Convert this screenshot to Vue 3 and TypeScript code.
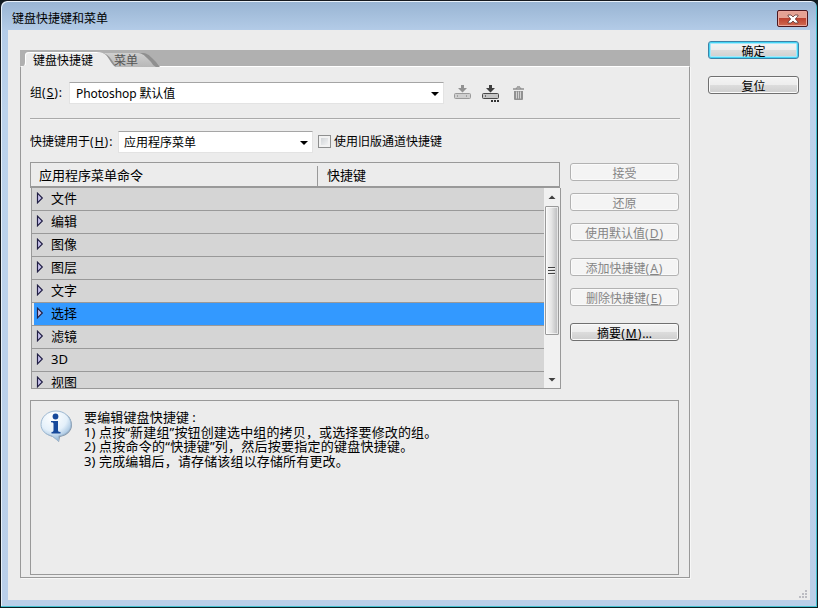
<script setup lang="ts">
import { ref } from 'vue'

interface Action {
  label: string
  key?: string
  tail?: string
  enabled?: boolean
  spaced?: boolean
}

const menus: string[] = ['文件', '编辑', '图像', '图层', '文字', '选择', '滤镜', '3D', '视图']
const selected = ref('选择')
const legacy = ref(false)
const actions: Action[] = [
  { label: '接受' },
  { label: '还原' },
  { label: '使用默认值', key: 'D' },
  { label: '添加快捷键', key: 'A', spaced: true },
  { label: '删除快捷键', key: 'E' },
  { label: '摘要', key: 'M', tail: '...', enabled: true, spaced: true },
]
</script>

<template>
  <div class="window">
    <header class="titlebar">
      <span class="title">键盘快捷键和菜单</span>
      <button class="close" aria-label="关闭">
        <svg width="12" height="10" viewBox="0 0 12 10">
          <path d="M1 1h3l2 2 2-2h3v1L8.3 5 11 8v1H8L6 7 4 9H1V8l2.7-3L1 2z" fill="#fff" stroke="#5b3434" stroke-width=".8" />
        </svg>
      </button>
    </header>
    <main class="client">
      <section class="panel">
        <nav class="tabs">
          <svg class="tab-shapes" width="160" height="17" viewBox="0 0 160 17">
            <defs>
              <linearGradient id="idleTab" x2="0" y2="1">
                <stop stop-color="#cfcfcf" /><stop offset="1" stop-color="#b7b7b7" />
              </linearGradient>
            </defs>
            <path d="M84 3h37c6 0 8 2 11 5l4 4q2 3 4 5H90z" fill="#8f8f8f" />
            <path d="M84 3h34c6 0 8 2 11 5l4 4q2 4 5 5H90z" fill="url(#idleTab)" transform="translate(-2 0)" />
            <path d="M82 3c6 1 9 5 14 14H83z" fill="#929292" />
            <path d="M0 17q5 0 5-5V5q0-3 4-3h68c6 0 9 2 12 7q4 7 7 8z" fill="#ececec" />
            <path d="M5.5 15V5q0-2.500 4-2.500h68" fill="none" stroke="#fff" />
          </svg>
          <span class="tab current">键盘快捷键</span>
          <span class="tab idle">菜单</span>
        </nav>
        <div class="panel-body">
          <div class="set-row">
            <label>组<span class="mnemonic">(<u>S</u>):</span></label>
            <div class="combo set-combo"><span class="set-name">Photoshop 默认值</span><i class="arrow" /></div>
            <svg class="tool" width="18" height="16" viewBox="0 0 18 16">
              <rect x=".5" y="8.500" width="16" height="5" rx="1" fill="#cfcfcf" stroke="#999" />
              <path d="M7 0h3v3h3L8.500 7.500 4 3h3z" fill="#929292" /><path d="M3 11h1M12 11h1" stroke="#777" />
            </svg>
            <svg class="tool save-as" width="18" height="18" viewBox="0 0 18 18">
              <rect x=".5" y="8.500" width="16" height="5" rx="1" fill="#c5c5c5" stroke="#484848" />
              <path d="M7 0h3v3h3L8.500 7.500 4 3h3z" fill="#3f3f3f" /><path d="M3 11h1" stroke="#222" />
              <path d="M9 16h2M12 16h2M15 16h2" stroke="#333" stroke-width="2" />
            </svg>
            <svg class="tool trash" width="11" height="15" viewBox="0 0 11 15">
              <path d="M0 3h11M4 1h3M3.500 3V1.500M7.500 3V1.500" stroke="#909090" stroke-width="1.300" />
              <path d="M1 5h9v8q0 1-1 1H2q-1 0-1-1z" fill="#919191" />
              <path d="M3.500 5.500v7M5.500 5.500v7M7.500 5.500v7" stroke="#d2d2d2" />
            </svg>
          </div>
          <hr>
          <div class="for-row">
            <label>快捷键用于<span class="mnemonic">(<u>H</u>):</span></label>
            <div class="combo for-combo"><span>应用程序菜单</span><i class="arrow" /></div>
            <button class="check" role="checkbox" :aria-checked="legacy" @click="legacy = !legacy" />
            <span>使用旧版通道快捷键</span>
          </div>
          <div class="middle">
            <div class="table">
              <div class="thead"><span class="command">应用程序菜单命令</span><span class="shortcut">快捷键</span></div>
              <div class="tbody">
                <ul>
                  <li v-for="m in menus" :key="m" :class="{ selected: m === selected }" @click="selected = m">
                    <svg width="8" height="12" viewBox="0 0 8 12"><path d="M1.500 1.200v9.600L6.300 6z" fill="#c9c3ef" stroke="#211f45" stroke-width="1.200" /></svg>
                    <span>{{ m }}</span>
                  </li>
                </ul>
                <div class="scrollbar">
                  <svg width="16" height="18" viewBox="0 0 16 18"><path d="M4.500 11L8 7.500 11.500 11z" fill="#404040" /></svg>
                  <div class="thumb"><i /><i /><i /></div>
                  <svg class="down" width="16" height="18" viewBox="0 0 16 18"><path d="M4.500 8h7L8 11.500z" fill="#404040" /></svg>
                </div>
              </div>
            </div>
            <div class="actions">
              <button v-for="a in actions" :key="a.label" class="button" :class="{ disabled: !a.enabled, spaced: a.spaced }">
                <span>{{ a.label }}<span v-if="a.key" class="mnemonic">(<u>{{ a.key }}</u>)</span>{{ a.tail }}</span>
              </button>
            </div>
          </div>
          <div class="info">
            <svg width="34" height="34" viewBox="0 0 34 34">
              <defs>
                <radialGradient id="bubble" cx=".4" cy=".2" r=".85">
                  <stop stop-color="#fff" /><stop offset=".55" stop-color="#e4f0fa" /><stop offset="1" stop-color="#83acd3" />
                </radialGradient>
              </defs>
              <path d="M17 2C8 2 2 7.500 2 15c0 6 4.500 10.500 11 12l6 5 1-5c7-1.300 12-6 12-12C32 7.500 26 2 17 2z" fill="#58718c" opacity=".7" />
              <path d="M16 1C7.500 1 1 7 1 14.500c0 6 4.500 10 11 11.500l6.500 5V26C26 25 31 20.500 31 14.500 31 7 24.500 1 16 1z" fill="url(#bubble)" stroke="#9eb9d2" />
              <circle cx="15.500" cy="6.500" r="2.900" fill="#16499b" />
              <path d="M11 11h7v9.500q0 1.500 2.500 1.500v1.500h-9V22q2 0 2-1.500v-7q0-1.200-2.500-1.200z" fill="#16499b" />
            </svg>
            <div class="help">
              <p>要编辑键盘快捷键<span class="colon">:</span></p>
              <p><span class="num">1)</span>点按“新建组”按钮创建选中组的拷贝，或选择要修改的组。</p>
              <p class="wide"><span class="num">2)</span>点按命令的“快捷键”列，然后按要指定的键盘快捷键。</p>
              <p><span class="num">3)</span>完成编辑后，请存储该组以存储所有更改。</p>
            </div>
          </div>
        </div>
      </section>
      <aside class="confirm">
        <button class="button primary"><span>确定</span></button>
        <button class="button"><span>复位</span></button>
      </aside>
      <svg class="grip" width="10" height="10" viewBox="0 0 10 10">
        <path d="M7 1h2v2H7zM4 4h2v2H4zM7 4h2v2H7zM1 7h2v2H1zM4 7h2v2H4zM7 7h2v2H7z" fill="#bcbcc2" />
      </svg>
    </main>
  </div>
</template>

<style>
body { margin: 0; background: #101b20; }
</style>

<style scoped>
* { box-sizing: border-box; }
.window {
  width: 818px; height: 608px; padding: 0 7px 7px; overflow: hidden;
  border: 1px solid #15191e; border-bottom-color: #071f22; border-radius: 7px 7px 0 0;
  background: linear-gradient(#98b4d2, #b4cce8 30px, #bcd3ec 110px, #bacfe9);
  box-shadow: inset -1px -1px #45c0cf, inset 1px 1px #e8f1f9;
  font: 12px/16px "Noto Sans", "Noto Sans CJK SC", sans-serif; color: #000;
}
button { font: inherit; color: inherit; padding: 0; margin: 0; }
.mnemonic { letter-spacing: 1px; }
.titlebar { height: 29px; display: flex; justify-content: space-between; padding: 9px 2px 0 4px; }
.title { padding-top: 1px; }
.close {
  display: flex; align-items: center; justify-content: center; width: 31px; height: 17px;
  border: 1px solid #4b1820; border-radius: 2px; box-shadow: inset 0 0 0 1px #eba79d;
  background: linear-gradient(#e5a294 0 45%, #bd4230 50%, #d06b52);
}
.client { width: 802px; height: 570px; display: flex; padding: 20px 11px 0 12px; background: #ececec; flex-wrap: wrap; }
.panel { width: 670px; height: 528px; }
.tabs { height: 16px; background: #b0b0b0; display: grid; grid-template-columns: 13px 81px 1fr; }
.tab-shapes { grid-column: 1 / 4; grid-row: 1; }
.tab { grid-row: 1; line-height: 22px; height: 16px; }
.current { grid-column: 2; }
.idle { grid-column: 3; color: #555; }
.panel-body { height: 512px; border: 1px solid #999; border-top: 1px solid #fff; padding: 15px 9px 0; box-shadow: 1px 1px #f7f7f7; }
.set-row { height: 22px; display: flex; align-items: center; }
.set-row label { width: 39px; white-space: nowrap; }
.combo { height: 22px; display: flex; align-items: center; justify-content: space-between; background: #fff; border: 1px solid #e3e3e3; border-top-color: #a5a5a5; padding: 1px 4px 0 6px; }
.set-combo { width: 375px; }
.set-name { letter-spacing: -.1px; }
.arrow { border: 4px solid transparent; border-top-color: #000; border-bottom: 0; }
.tool { margin-left: 10px; margin-top: -1px; }
.save-as { margin: 1px 0 0 10px; }
.trash { margin-left: 13px; margin-top: 1px; }
hr { height: 2px; margin: 14px 0 11px; border: 0; border-top: 1px solid #aaa; background: #f5f5f5; }
.for-row { height: 22px; display: flex; align-items: center; }
.for-row label { width: 88px; white-space: nowrap; }
.for-combo { width: 195px; padding-left: 5px; }
.check { width: 13px; height: 13px; margin: -1px 3px 0 5px; border: 1px solid #8e8f8f; background: linear-gradient(135deg, #c8ccd0, #fafafa); box-shadow: inset 0 0 0 2px #f2f2f2; }
.middle { display: flex; margin-top: 9px; gap: 9px; }
.table { width: 531px; height: 227px; font-size: 13px; }
.thead { height: 26px; width: 530px; border: 1px solid #999; border-bottom-width: 2px; display: flex; padding-top: 3px; }
.thead span { line-height: 19px; }
.command { width: 287px; padding-left: 8px; border-right: 1px solid #999; }
.shortcut { padding-left: 9px; }
.tbody { height: 201px; margin-left: 1px; display: flex; overflow: hidden; border: 1px solid #999; border-top: 0; }
ul { list-style: none; padding: 0; margin: 0; width: 512px; background: #d5d5d5; }
li { height: 23px; border-bottom: 1px solid #999; display: flex; align-items: center; gap: 7px; padding: 0 0 2px 4px; }
li span { line-height: 16px; }
li.selected { background: linear-gradient(90deg, #ececec 2px, #3399ff 2px); }
.scrollbar { flex: 1; background: #f1f1f1; display: flex; flex-direction: column; }
.thumb { width: 14px; height: 129px; margin-left: 1px; flex: none; display: flex; flex-direction: column; align-items: center; justify-content: center; gap: 1px; border: 1px solid #9a9a9a; border-radius: 1px; background: linear-gradient(90deg, #f7f7f7, #e5e5e5 45%, #b9babc); box-shadow: inset 0 0 0 1px #ffffff99; }
.thumb i { width: 7px; height: 2px; margin-right: 2px; border-top: 1px solid #444; background: #eee; }
.down { margin-top: auto; }
.button { display: flex; align-items: center; justify-content: center; height: 18px; border: 1px solid #707070; border-radius: 3px; background: linear-gradient(#f4f4f4, #ededed 48%, #dcdcdc 52%, #cecece); box-shadow: inset 0 0 0 1px #fafafa; }
.button > span { padding-top: 3px; }
.disabled { color: #858585; border-color: #b2b2b2; background: #f4f4f4; }
.primary { border-color: #3c83a8; box-shadow: inset 0 0 0 1px #45d5f4, inset 0 0 0 2px #a6e8fb; }
.actions { width: 109px; padding-top: 1px; display: flex; flex-direction: column; gap: 12px; }
.actions .button { width: 109px; }
.actions .spaced { margin-top: 5px; }
.info { width: 649px; height: 175px; margin-top: 11px; border: 1px solid #999; display: flex; padding: 9px 0 0 9px; }
.help { padding: 0 0 0 10px; font-size: 13px; }
.help p { margin: 0; height: 14.500px; line-height: 14.500px; white-space: nowrap; letter-spacing: .15px; }
.help p.wide { letter-spacing: .25px; }
.colon { margin-left: 3px; }
.num { display: inline-block; width: 15px; }
.confirm { width: 91px; margin-left: 18px; display: flex; flex-direction: column; gap: 17px; margin-top: -9px; height: 537px; }
.confirm .button { width: 91px; }
.grip { margin-left: auto; margin-top: 9px; margin-right: -9px; }
</style>
